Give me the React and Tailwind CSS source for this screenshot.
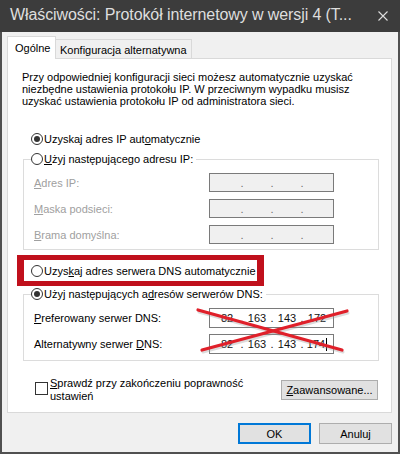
import React from 'react';

function Radio({ checked }) {
  return (
    <span className="w-[12px] h-[12px] rounded-full border border-[#333333] bg-white flex items-center justify-center shrink-0">
      {checked && <span className="w-[6px] h-[6px] rounded-full bg-[#333333]" />}
    </span>
  );
}

function IpField({ values = ['', '', '', ''], disabled, cursor, tall }) {
  return (
    <div
      className={`w-[125px] ${tall ? 'h-[20px]' : 'h-[19px]'} border border-[#7a7a7a] flex items-center pl-[2px] ${
        disabled ? 'bg-[#f0f0f0] text-[#6d6d6d]' : 'bg-white text-[#111111]'
      }`}
    >
      {[0, 1, 2, 3].map((i) => (
        <React.Fragment key={i}>
          {i > 0 && <span className="w-0 flex justify-center">.</span>}
          <span className="w-[30px] flex justify-center items-center">
            {values[i]}
            {cursor && i === 3 && <span className="w-[1px] h-[13px] bg-black ml-[1px]" />}
          </span>
        </React.Fragment>
      ))}
    </div>
  );
}

function Legend({ checked, children }) {
  return (
    <div className="-mt-[8px] ml-[7px] w-fit bg-white flex items-center h-[14px] pr-[3px]">
      <Radio checked={checked} />
      <span className="ml-[1px]">{children}</span>
    </div>
  );
}

export default function App() {
  return (
    <div className="w-[400px] h-[454px] flex flex-col overflow-hidden font-['Liberation_Sans',Arial,sans-serif] text-[11px] leading-[12px] text-black">
      <div className="h-[32px] shrink-0 bg-[#3c3c3c] flex items-center justify-between pl-[10px] pr-[12px] pb-[3px] text-[16px] leading-[18px] text-[#dedede]">
        <span className="tracking-[-0.1px]">Właściwości: Protokół internetowy w wersji 4 (T...</span>
        <svg width="10" height="10" viewBox="0 0 10 10" className="mt-[3px]">
          <path d="M0.5 0.5 L9.5 9.5 M9.5 0.5 L0.5 9.5" stroke="#dedede" strokeWidth="1.1" />
        </svg>
      </div>

      <div className="flex-1 bg-[#f0f0f0] border-x-2 border-b-2 border-[#505050] flex flex-col">
        <div className="mt-[4px] pl-[5px] h-[22px] flex items-end">
          <div className="h-[23px] -mb-[1px] w-[49px] relative z-10 bg-white border-t border-x border-[#d9d9d9] flex items-center pl-[7px]">
            Ogólne
          </div>
          <div className="h-[19px] w-[136px] bg-[#f0f0f0] border-t border-r border-[#d9d9d9] flex items-center pl-[4px] pt-[1px]">
            Konfiguracja alternatywna
          </div>
        </div>

        <div className="ml-[5px] w-[385px] h-[355px] bg-white border border-[#d9d9d9] flex flex-col">
          <p className="mt-[12px] ml-[14px]">
            Przy odpowiedniej konfiguracji sieci możesz automatycznie uzyskać
            <br />
            niezbędne ustawienia protokołu IP. W przeciwnym wypadku musisz
            <br />
            uzyskać ustawienia protokołu IP od administratora sieci.
          </p>

          <div className="mt-[25px] ml-[23px] h-[14px] flex items-center">
            <Radio checked />
            <span className="ml-[1px]">
              Uzyskaj adres IP aut<u>o</u>matycznie
            </span>
          </div>

          <div className="mt-[13px] ml-[15px] w-[356px] border border-[#dcdcdc] pb-[5px]">
            <Legend>
              <u>U</u>żyj następującego adresu IP:
            </Legend>
            <div className="mt-[7px] pl-[10px] flex flex-col gap-[7px] text-[#a0a0a0]">
              <div className="flex items-center">
                <span className="w-[175px]">
                  <u>A</u>dres IP:
                </span>
                <IpField disabled />
              </div>
              <div className="flex items-center">
                <span className="w-[175px]">
                  <u>M</u>aska podsieci:
                </span>
                <IpField disabled />
              </div>
              <div className="flex items-center">
                <span className="w-[175px]">
                  <u>B</u>rama domyślna:
                </span>
                <IpField disabled />
              </div>
            </div>
          </div>

          <div className="mt-[5px] ml-[9px] w-[247px] h-[31px] border-x-[7px] border-y-[5px] border-[#c0101c] flex items-center pl-[7px]">
            <Radio />
            <span className="ml-[1px]">
              Uzys<u>k</u>aj adres serwera DNS automatycznie
            </span>
          </div>

          <div className="mt-[8px] ml-[15px] w-[356px] border border-[#dcdcdc] pb-[6px] relative">
            <Legend checked>
              Użyj następujących a<u>d</u>resów serwerów DNS:
            </Legend>
            <div className="mt-[7px] pl-[10px] flex flex-col gap-[6px]">
              <div className="flex items-center">
                <span className="w-[175px]">
                  <u>P</u>referowany serwer DNS:
                </span>
                <IpField tall values={['82', '163', '143', '172']} />
              </div>
              <div className="flex items-center">
                <span className="w-[175px]">
                  Alternatywny serwer <u>D</u>NS:
                </span>
                <IpField tall cursor values={['82', '163', '143', '174']} />
              </div>
            </div>
            <svg className="absolute left-0 top-0 overflow-visible pointer-events-none" width="354" height="66">
              <path d="M175 17 L319 57" stroke="#9a9a9a" strokeOpacity="0.35" strokeWidth="3" strokeLinecap="round" />
              <path d="M179 57 L324 18" stroke="#9a9a9a" strokeOpacity="0.35" strokeWidth="3" strokeLinecap="round" />
              <path d="M174 15 L318 55" stroke="#e0202a" strokeWidth="3.2" strokeLinecap="round" />
              <path d="M178 55 L323 16" stroke="#e0202a" strokeWidth="3.2" strokeLinecap="round" />
            </svg>
          </div>

          <div className="mt-[16px] pl-[27px] pr-[13px] flex items-start justify-between">
            <div className="flex items-start">
              <span className="mt-[5px] w-[13px] h-[13px] border border-[#333333] bg-white shrink-0" />
              <span className="ml-[2px] w-[200px] leading-[13px]">
                <u>S</u>prawdź przy zakończeniu poprawność ustawień
              </span>
            </div>
            <button className="mt-[3px] w-[97px] h-[20px] bg-[#e1e1e1] border border-[#adadad] flex items-center justify-center">
              <span>
                <u>Z</u>aawansowane...
              </span>
            </button>
          </div>
        </div>

        <div className="mt-[10px] pr-[6px] flex justify-end gap-[8px]">
          <button className="w-[73px] h-[21px] bg-[#e1e1e1] border-2 border-[#0078d7] flex items-center justify-center">
            OK
          </button>
          <button className="w-[73px] h-[21px] bg-[#e1e1e1] border border-[#adadad] flex items-center justify-center">
            Anuluj
          </button>
        </div>
      </div>
    </div>
  );
}
